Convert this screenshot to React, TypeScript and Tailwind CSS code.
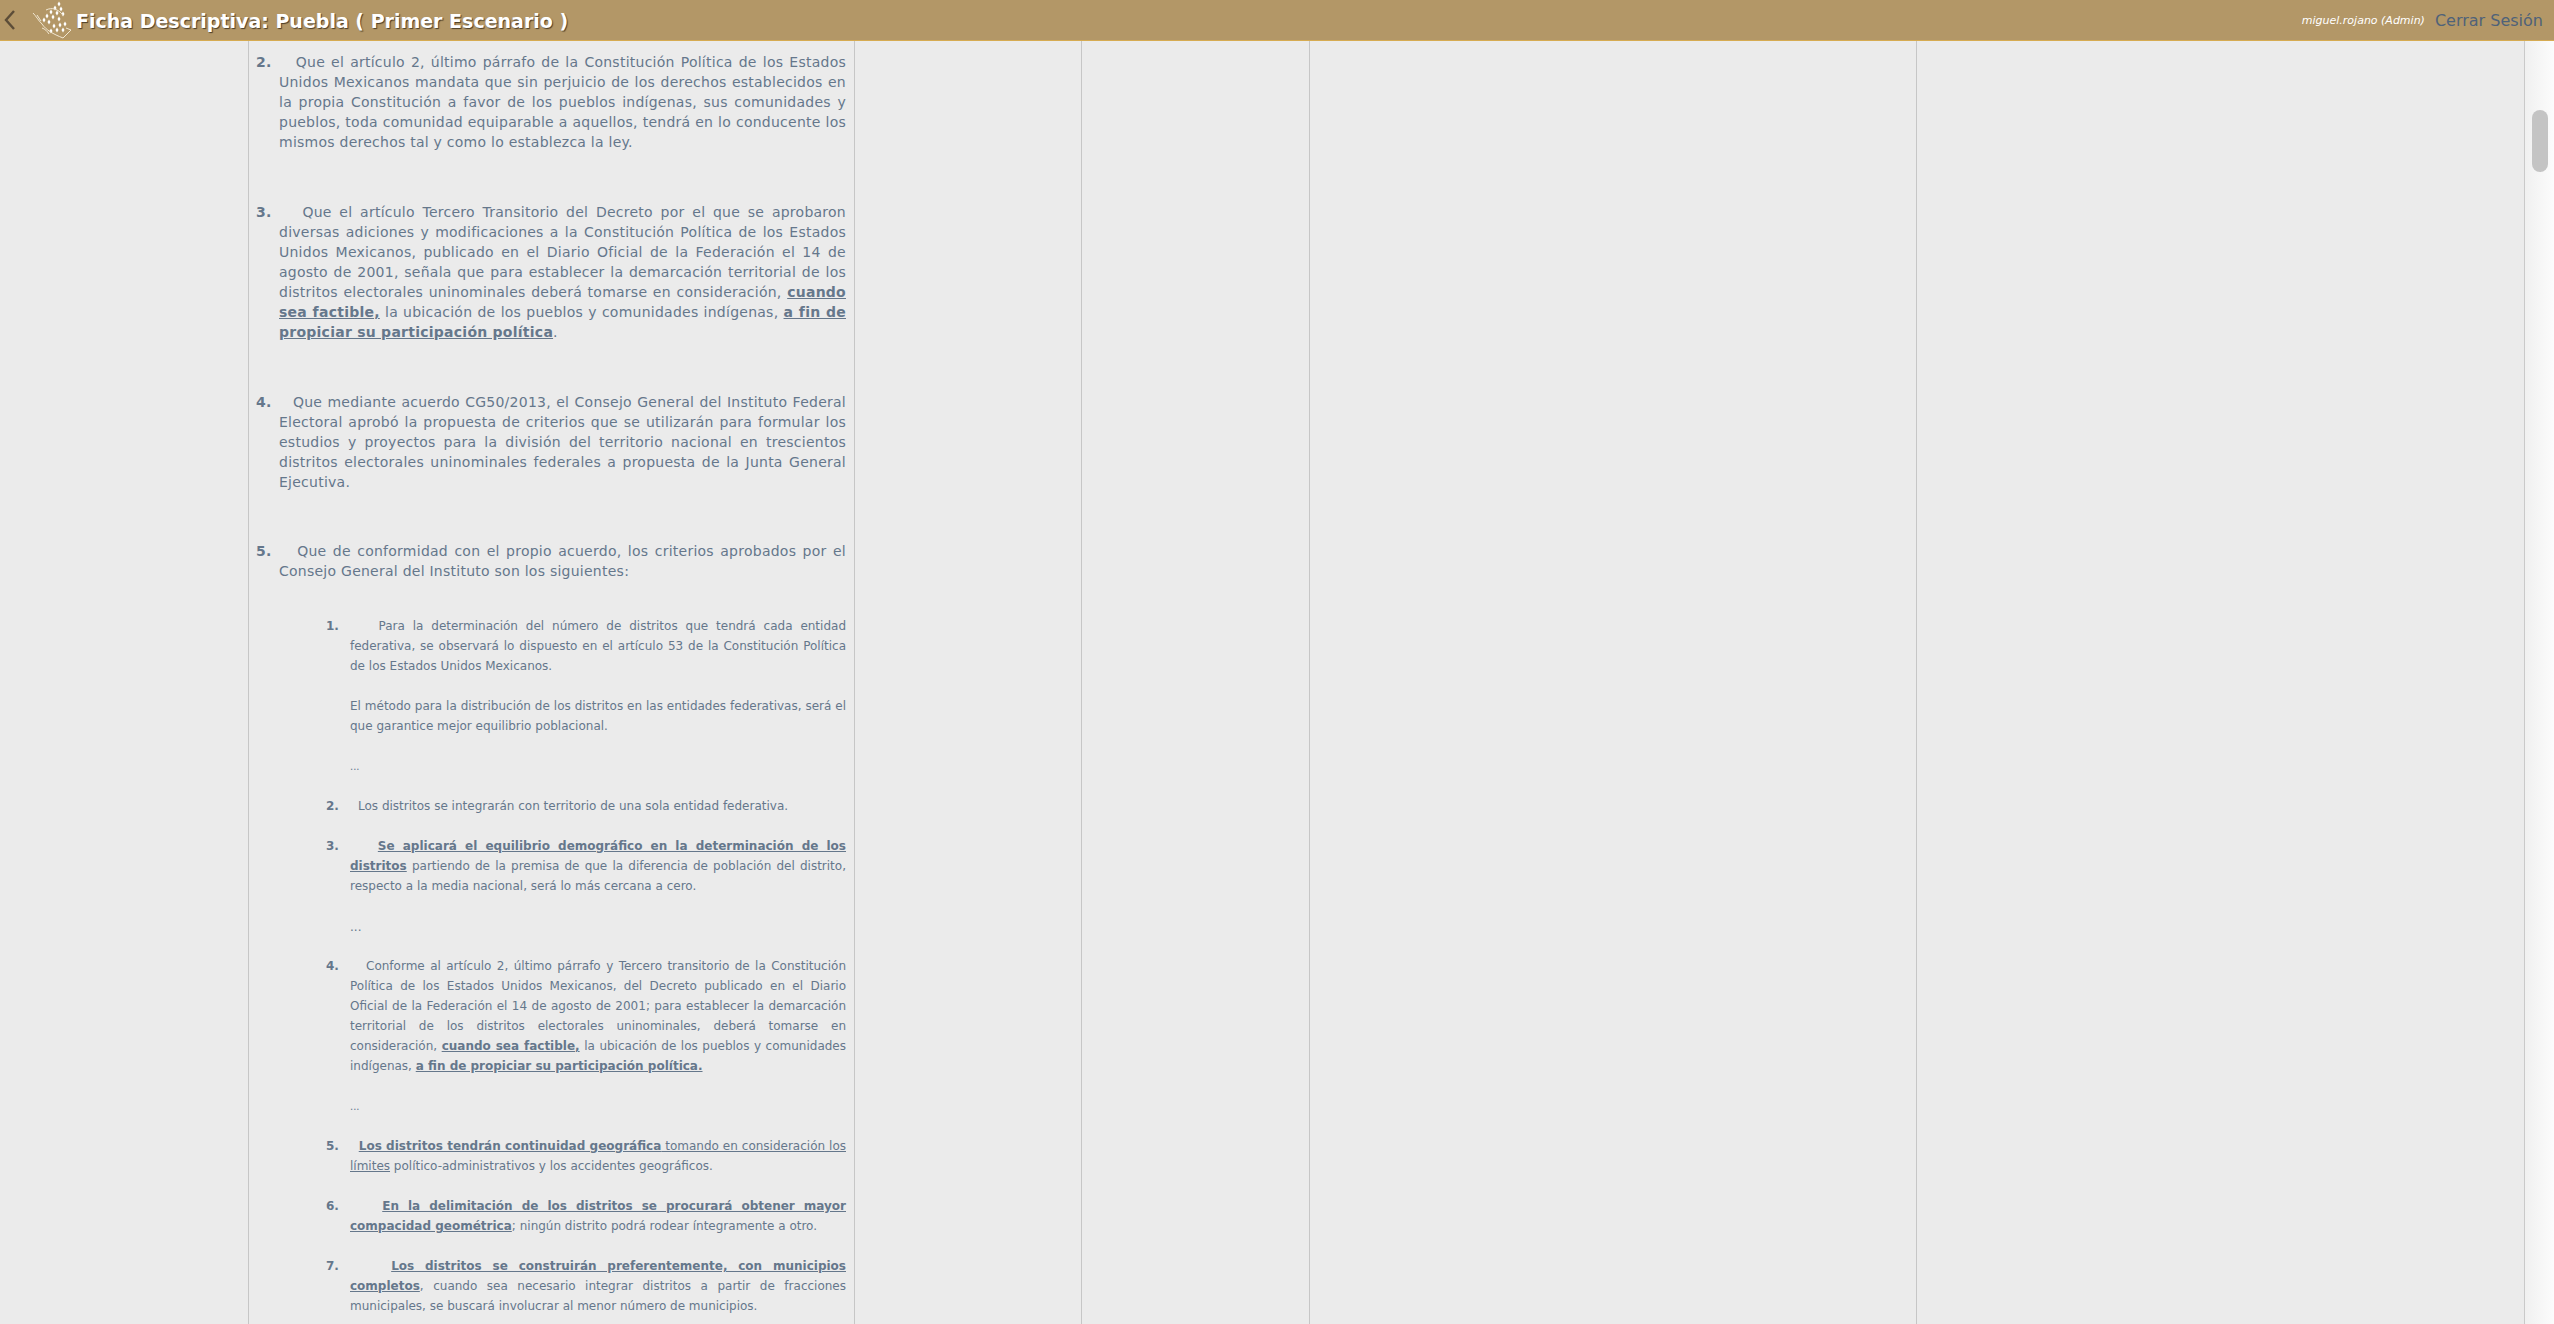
const mainFont = { fontFamily: '"DejaVu Sans", Verdana, sans-serif' };

function Logo() {
  const dots = [
    [29, 4], [25, 8], [31, 9], [21, 12], [27, 13], [33, 14], [17, 16], [23, 17], [29, 19], [14, 20], [19, 22],
    [24, 26], [30, 25], [35, 24], [21, 31], [27, 30], [33, 30],
  ];
  return (
    <svg width="42" height="40" viewBox="0 0 42 40" className="shrink-0">
      {dots.map(([x, y]) => (
        <path key={`${x}-${y}`} d={`M${x} ${y - 2.6}l1.5 2.6-1.5 2.6-1.5-2.6z`} fill="#fff" />
      ))}
      <path
        d="M3 13c3 3 5 7 9 11 4 6 11 10 21 14l3-3 5-5-5-2M11 21 7 15M16 10c6-3 12-1 17 5M12 28c3 1 5 3 7 6"
        fill="none"
        stroke="#f1e7d2"
        strokeWidth="1"
      />
    </svg>
  );
}

function Item({ n, gap = "mb-[50px]", children }: { n: number; gap?: string; children: React.ReactNode }) {
  return (
    <p className={`${gap} pl-[23px] -indent-[23px] text-justify text-sm leading-5 tracking-[0.25px]`}>
      <b>{n}.</b>&nbsp;&nbsp;&nbsp; {children}
    </p>
  );
}

function SubItem({ n, children, gap = "mb-5" }: { n: number; children: React.ReactNode; gap?: string }) {
  return (
    <p className={`${gap} pl-6 -indent-6 text-justify text-xs leading-5`}>
      <b>{n}.</b>&nbsp;&nbsp;&nbsp;&nbsp; {children}
    </p>
  );
}

function Dots({ big }: { big?: boolean }) {
  return <p className={`mb-[19px] mt-[21px] pl-6 leading-5 ${big ? "text-xs" : "text-[10px]"}`}>...</p>;
}

export default function App() {
  return (
    <div className="flex h-screen flex-col overflow-hidden bg-[#ebebeb] text-[#65778b]" style={mainFont}>
      <header className="flex h-[41px] shrink-0 items-center border-b border-[#d6ab52] bg-[#b39767]">
        <svg width="14" height="24" viewBox="0 0 14 24" className="ml-[3px] shrink-0">
          <path d="M11 3 3 12l8 9" fill="none" stroke="#5c4d38" strokeWidth="2.4" />
        </svg>
        <div className="ml-[13px]">
          <Logo />
        </div>
        <h1 className="ml-1 pt-0.5 text-[19px] font-bold text-white [text-shadow:1px_1px_1px_#4b3d28]">
          Ficha Descriptiva: Puebla ( Primer Escenario )
        </h1>
        <span className="ml-auto pt-0.5 text-[11px] italic text-white">miguel.rojano (Admin)</span>
        <a className="ml-[10px] mr-[11px] pt-0.5 text-base text-[#4f6279]">Cerrar Sesión</a>
      </header>

      <div className="flex min-h-0 flex-1">
        <div className="w-[248px] shrink-0" />
        <section className="h-full w-[607px] shrink-0 overflow-hidden border-x border-[#c6c6c6] pl-[7px] pr-2 pt-[11px]">
          <Item n={2}>
            Que el artículo 2, último párrafo de la Constitución Política de los Estados Unidos Mexicanos mandata que
            sin perjuicio de los derechos establecidos en la propia Constitución a favor de los pueblos indígenas, sus
            comunidades y pueblos, toda comunidad equiparable a aquellos, tendrá en lo conducente los mismos derechos
            tal y como lo establezca la ley.
          </Item>
          <Item n={3}>
            Que el artículo Tercero Transitorio del Decreto por el que se aprobaron diversas adiciones y modificaciones
            a la Constitución Política de los Estados Unidos Mexicanos, publicado en el Diario Oficial de la Federación
            el 14 de agosto de 2001, señala que para establecer la demarcación territorial de los distritos electorales
            uninominales deberá tomarse en consideración, <u className="font-bold">cuando sea factible,</u> la ubicación
            de los pueblos y comunidades indígenas,{" "}
            <u className="font-bold">a fin de propiciar su participación política</u>.
          </Item>
          <Item n={4} gap="mb-[49px]">
            Que mediante acuerdo CG50/2013, el Consejo General del Instituto Federal Electoral aprobó la propuesta de
            criterios que se utilizarán para formular los estudios y proyectos para la división del territorio nacional
            en trescientos distritos electorales uninominales federales a propuesta de la Junta General Ejecutiva.
          </Item>
          <Item n={5} gap="mb-[35px]">
            Que de conformidad con el propio acuerdo, los criterios aprobados por el Consejo General del Instituto son
            los siguientes:
          </Item>

          <div className="ml-[70px]">
            <SubItem n={1} gap="mb-0">
              Para la determinación del número de distritos que tendrá cada entidad federativa, se observará lo
              dispuesto en el artículo 53 de la Constitución Política de los Estados Unidos Mexicanos.
            </SubItem>
            <p className="mt-5 pl-6 text-justify text-xs leading-5">
              El método para la distribución de los distritos en las entidades federativas, será el que garantice mejor
              equilibrio poblacional.
            </p>
            <Dots />
            <SubItem n={2}>Los distritos se integrarán con territorio de una sola entidad federativa.</SubItem>
            <SubItem n={3} gap="mb-0">
              <u className="font-bold">Se aplicará el equilibrio demográfico en la determinación de los distritos</u>{" "}
              partiendo de la premisa de que la diferencia de población del distrito, respecto a la media nacional, será
              lo más cercana a cero.
            </SubItem>
            <Dots big />
            <SubItem n={4} gap="mb-0">
              Conforme al artículo 2, último párrafo y Tercero transitorio de la Constitución Política de los Estados
              Unidos Mexicanos, del Decreto publicado en el Diario Oficial de la Federación el 14 de agosto de 2001; para
              establecer la demarcación territorial de los distritos electorales uninominales, deberá tomarse en
              consideración, <u className="font-bold">cuando sea factible,</u> la ubicación de los pueblos y comunidades
              indígenas, <u className="font-bold">a fin de propiciar su participación política.</u>
            </SubItem>
            <Dots />
            <SubItem n={5}>
              <u>
                <b>Los distritos tendrán continuidad geográfica</b> tomando en consideración los límites
              </u>{" "}
              político-administrativos y los accidentes geográficos.
            </SubItem>
            <SubItem n={6}>
              <u className="font-bold">En la delimitación de los distritos se procurará obtener mayor compacidad geométrica</u>
              ; ningún distrito podrá rodear íntegramente a otro.
            </SubItem>
            <SubItem n={7}>
              <u className="font-bold">Los distritos se construirán preferentemente, con municipios completos</u>, cuando
              sea necesario integrar distritos a partir de fracciones municipales, se buscará involucrar al menor número
              de municipios.
            </SubItem>
          </div>
        </section>
        <div className="w-[227px] shrink-0 border-r border-[#c6c6c6]" />
        <div className="w-[228px] shrink-0 border-r border-[#c6c6c6]" />
        <div className="w-[607px] shrink-0 border-r border-[#c6c6c6]" />
        <div className="flex-1" />
        <aside className="w-[30px] shrink-0 border-l border-[#c9c9c9] bg-gradient-to-r from-[#f0f0f0] to-[#fcfcfc] pl-[7px] pt-[69px]">
          <div className="h-[62px] w-4 rounded-lg bg-[#c4c4c4]" />
        </aside>
      </div>
    </div>
  );
}
